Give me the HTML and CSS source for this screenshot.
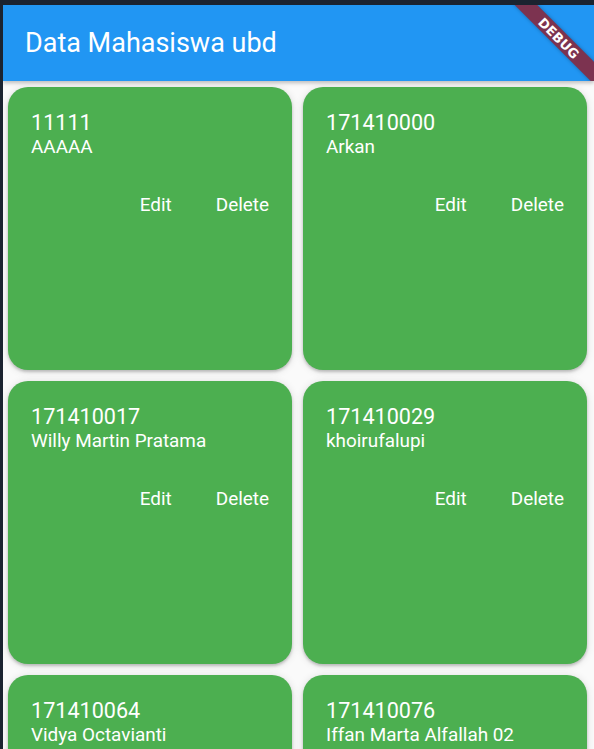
FILE: index.html
```html
<!DOCTYPE html>
<html lang="id">
<head>
<meta charset="utf-8">
<title>Data Mahasiswa ubd</title>
<link rel="stylesheet" href="styles.css">
</head>
<body>
<div class="screen">
  <header class="appbar">
    <h1 class="title">Data Mahasiswa ubd</h1>
    <div class="banner"><span>DEBUG</span></div>
  </header>
  <main class="grid">
    <div class="card">
      <div class="nim">11111</div>
      <div class="name">AAAAA</div>
      <div class="actions"><span class="btn">Edit</span><span class="btn">Delete</span></div>
    </div>
    <div class="card">
      <div class="nim">171410000</div>
      <div class="name">Arkan</div>
      <div class="actions"><span class="btn">Edit</span><span class="btn">Delete</span></div>
    </div>
    <div class="card">
      <div class="nim">171410017</div>
      <div class="name">Willy Martin Pratama</div>
      <div class="actions"><span class="btn">Edit</span><span class="btn">Delete</span></div>
    </div>
    <div class="card">
      <div class="nim">171410029</div>
      <div class="name">khoirufalupi</div>
      <div class="actions"><span class="btn">Edit</span><span class="btn">Delete</span></div>
    </div>
    <div class="card">
      <div class="nim">171410064</div>
      <div class="name">Vidya Octavianti</div>
    </div>
    <div class="card">
      <div class="nim">171410076</div>
      <div class="name">Iffan Marta Alfallah 02</div>
    </div>
  </main>
</div>
</body>
</html>
```
FILE: styles.css
```css
html, body {
  margin: 0;
  padding: 0;
  height: 100%;
}
body {
  background: #1b2330;
  font-family: Roboto, "Liberation Sans", sans-serif;
  overflow: hidden;
}
.screen {
  margin: 5px 0 0 3px;
  height: 744px;
  background: #fafafa;
  overflow: hidden;
  position: relative;
}
.appbar {
  height: 76px;
  background: #2196f3;
  display: flex;
  align-items: center;
  box-shadow: 0 2px 4px rgba(0,0,0,0.25);
  position: relative;
  z-index: 2;
  overflow: hidden;
}
.title {
  margin: 0;
  padding-left: 22px;
  font-size: 27px;
  font-weight: 400;
  color: #fff;
}
.banner {
  position: absolute;
  left: 496px;
  top: 25px;
  width: 120px;
  height: 16px;
  background: #7c3350;
  transform: rotate(45deg);
  display: flex;
  align-items: center;
  justify-content: center;
  box-shadow: 0 0 4px rgba(0,0,0,0.3);
}
.banner span {
  color: #fff;
  font-family: "DejaVu Sans", sans-serif;
  font-weight: 700;
  font-size: 13px;
  letter-spacing: 0.2px;
}
.grid {
  display: grid;
  grid-template-columns: repeat(2, 284px);
  grid-auto-rows: 283px;
  gap: 11px;
  padding: 6px 0 0 5px;
}
.card {
  background: #4caf50;
  border-radius: 20px;
  box-shadow: 0 2px 3px rgba(0,0,0,0.2), 0 1px 8px rgba(0,0,0,0.12);
  padding: 23px 23px 0 23px;
  color: #fff;
}
.nim {
  font-size: 21.6px;
}
.name {
  font-size: 18.9px;
}
.actions {
  display: flex;
  justify-content: flex-end;
  gap: 44px;
  margin-top: 35px;
}
.btn {
  font-size: 18.9px;
  font-weight: 400;
}
```
